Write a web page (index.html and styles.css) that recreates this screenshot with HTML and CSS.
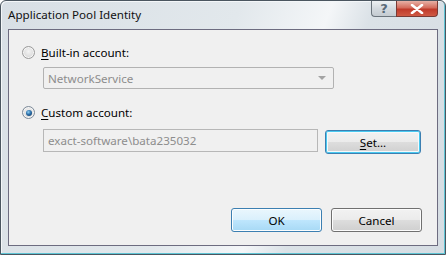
FILE: index.html
```html
<!DOCTYPE html>
<html lang="en">
<head>
    <meta charset="UTF-8">
    <title>Application Pool Identity</title>
    <link rel="stylesheet" href="styles.css">
</head>
<body>
    <div class="window">
        <div class="titlebar">
            <span class="title">Application Pool Identity</span>
            <div class="caption-buttons">
                <span class="cap-btn help">?</span>
                <span class="cap-btn close">
                    <svg width="14" height="10" viewBox="0 0 14 10">
                        <path d="M2 1 L12 9 M12 1 L2 9" stroke="#fff" stroke-width="2.6" stroke-linecap="round"/>
                    </svg>
                </span>
            </div>
        </div>

        <div class="client">
            <div class="option">
                <span class="radio"></span>
                <span class="label"><u>B</u>uilt-in account:</span>
            </div>
            <div class="select">
                <span>NetworkService</span>
                <span class="arrow"></span>
            </div>

            <div class="option custom">
                <span class="radio checked"></span>
                <span class="label"><u>C</u>ustom account:</span>
            </div>
            <div class="account-row">
                <div class="textbox">exact-software\bata235032</div>
                <button class="btn focused"><u>S</u>et...</button>
            </div>

            <div class="footer">
                <button class="btn default">OK</button>
                <button class="btn">Cancel</button>
            </div>
        </div>
    </div>
</body>
</html>
```

FILE: styles.css
```css
*, *::before, *::after {
    box-sizing: border-box;
}

html, body {
    width: 100%;
    height: 100%;
    margin: 0;
}
body {
    font-family: "Noto Sans", "Open Sans", sans-serif;
    font-size: 11.6px;
    color: #000;
    overflow: hidden;
    background: #fff;
}

.window {
    width: 446px;
    height: 255px;
    border: 1px solid #4b5660;
    border-radius: 6px 6px 0 0;
    background: linear-gradient(110deg, #d8dfe5 0%, #e2e8ec 45%, #f4f6f8 62%, #dbe2e7 70%, #d6dde3 100%);
    box-shadow: inset -1px -1px 0 #5fc4d4, inset 1px 1px 0 #f4f7f9;
    padding: 0 7px;
    display: flex;
    flex-direction: column;
}

.titlebar {
    height: 28px;
    display: flex;
    justify-content: space-between;
    align-items: flex-start;
}
.title {
    padding-top: 6px;
    line-height: 16px;
    color: #111;
}
.caption-buttons {
    display: flex;
}
.cap-btn {
    height: 16px;
    display: flex;
    align-items: center;
    justify-content: center;
    border: 1px solid #6b747c;
    border-top: none;
}
.help {
    width: 25px;
    border-right: none;
    border-radius: 0 0 0 4px;
    background: linear-gradient(#eef1f3, #d4dadf 50%, #c4cbd1);
    color: #5a6a78;
    font-size: 13px;
    font-weight: bold;
    font-family: "DejaVu Sans", sans-serif;
    line-height: 1;
}
.close {
    width: 42px;
    border-radius: 0 0 4px 0;
    border-color: #7a3a34;
    background: linear-gradient(#e8b1a6, #d46c5c 45%, #c03a2a 55%, #cf5a44);
}

.client {
    flex: 1;
    margin-bottom: 8px;
    border: 1px solid #6d6c80;
    background: #f0f0f0;
    padding: 15px 0 0 13px;
    display: flex;
    flex-direction: column;
}

.option {
    display: flex;
    align-items: center;
    height: 15px;
}
.option.custom {
    margin-top: 16px;
}
.label {
    margin-left: 6px;
    line-height: 15px;
}
.label u, .btn u {
    text-decoration-thickness: 1px;
    text-underline-offset: 2px;
}
.radio {
    width: 13px;
    height: 13px;
    border-radius: 50%;
    border: 1px solid #9a9a9a;
    background: radial-gradient(circle at 50% 40%, #f4f4f4 0%, #d9d9d9 70%, #cfcfcf 100%);
    box-shadow: inset 0 0 0 1px #f6f6f6;
    display: flex;
    align-items: center;
    justify-content: center;
}
.radio.checked {
    border-color: #7c8a99;
}
.radio.checked::after {
    content: "";
    width: 6px;
    height: 6px;
    border-radius: 50%;
    background: radial-gradient(circle at 40% 35%, #8fd0f5 0%, #2b6fa8 45%, #0c2d58 100%);
}

.select {
    margin: 7px 0 0 21px;
    width: 291px;
    height: 22px;
    border: 1px solid #b2b2b2;
    border-radius: 2px;
    background: #f0f0f0;
    color: #8d8d8d;
    display: flex;
    align-items: center;
    justify-content: space-between;
    padding: 0 7px 0 4px;
}
.arrow {
    width: 0;
    height: 0;
    border-left: 4px solid transparent;
    border-right: 4px solid transparent;
    border-top: 4px solid #a3a3a3;
}

.account-row {
    margin: 9px 0 0 21px;
    display: flex;
    align-items: flex-start;
    gap: 7px;
}
.textbox {
    width: 275px;
    height: 23px;
    border: 1px solid #b7b7b7;
    background: #f0f0f0;
    color: #8d8d8d;
    padding: 0 4px;
    line-height: 21px;
}

.btn {
    font-family: inherit;
    font-size: 11.6px;
    color: #000;
    height: 24px;
    border: 1px solid #707070;
    border-radius: 3px;
    background: linear-gradient(#f2f2f2 0%, #ebebeb 50%, #dddddd 51%, #cfcfcf 100%);
    box-shadow: inset 0 0 0 1px #fcfcfc;
    padding: 0;
    margin: 0;
}
.account-row .btn {
    width: 96px;
    margin-top: 1px;
}
.btn.focused {
    border-color: #3c7fb1;
    box-shadow: inset 0 0 0 1px #49c9f0, inset 0 0 0 2px #f5f8fa;
}
.btn.default {
    border-color: #3c7fb1;
    background: linear-gradient(#eaf6fd 0%, #d9f0fc 50%, #bee6fd 51%, #a7d9f5 100%);
    box-shadow: inset 0 0 0 1px #fbfdfe;
}

.footer {
    margin-top: auto;
    margin-bottom: 13px;
    margin-right: 15px;
    display: flex;
    justify-content: flex-end;
    gap: 9px;
}
.footer .btn {
    width: 91px;
}
```
